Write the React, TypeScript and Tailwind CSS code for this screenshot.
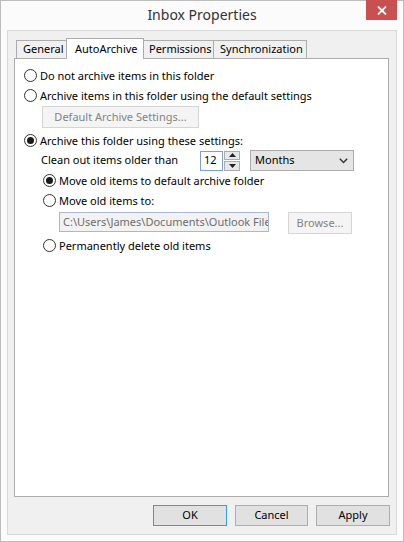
import React from "react";

const font = { fontFamily: '"Segoe UI", "Noto Sans", sans-serif' };

function Radio({ checked }: { checked?: boolean }) {
  return (
    <span className="flex h-[13px] w-[13px] shrink-0 items-center justify-center rounded-full border border-[#333333] bg-white">
      {checked && <span className="h-[7px] w-[7px] rounded-full bg-[#1a1a1a]" />}
    </span>
  );
}

function RadioRow({ label, checked, className = "" }: { label: string; checked?: boolean; className?: string }) {
  return (
    <div className={`flex h-[20px] items-center gap-[3px] ${className}`}>
      <Radio checked={checked} />
      <span className="text-[11px] leading-none text-black">{label}</span>
    </div>
  );
}

export default function App() {
  return (
    <div
      className="flex h-[542px] w-[404px] flex-col border border-[#bcbcbc] bg-[#fbfbfb]"
      style={font}
    >
      {/* Title bar */}
      <div className="grid h-[29px] grid-cols-[1fr_auto_1fr]">
        <div />
        <div className="flex items-center justify-center pb-[3px] text-[14px] text-[#333333]">
          Inbox Properties
        </div>
        <div className="flex items-start justify-end pr-[6px]">
          <div className="-mt-[1px] flex h-[20px] w-[31px] items-center justify-center bg-[#c75050]">
            <svg width="10" height="9" viewBox="0 0 10 9">
              <path d="M1 0.5 L9 8.5 M9 0.5 L1 8.5" stroke="white" strokeWidth="1.8" />
            </svg>
          </div>
        </div>
      </div>

      {/* Client area */}
      <div className="mx-[6px] flex h-[505px] flex-col border border-[#d9d9d9] bg-[#f0f0f0]">
        <div className="flex flex-col pl-[6px] pr-[7px] pt-[7px]">
          {/* Tabs */}
          <div className="flex items-end pl-[2px] text-[11px] text-black">
            <div className="flex h-[18px] w-[51px] items-center border border-b-0 border-[#acacac] bg-[#f0f0f0] pl-[6px]">
              General
            </div>
            <div className="relative z-10 -mb-[1px] -ml-[1px] flex h-[21px] w-[78px] items-start border border-b-0 border-[#acacac] bg-white pl-[8px] pt-[2px]">
              AutoArchive
            </div>
            <div className="-ml-[1px] flex h-[18px] w-[71px] items-center border border-b-0 border-[#acacac] bg-[#f0f0f0] pl-[5px]">
              Permissions
            </div>
            <div className="-ml-[1px] flex h-[18px] w-[94px] items-center border border-b-0 border-[#acacac] bg-[#f0f0f0] pl-[6px]">
              Synchronization
            </div>
          </div>

          {/* Panel */}
          <div className="flex h-[439px] flex-col border border-[#acacac] bg-white pl-[9px] pt-[6px]">
            <RadioRow label="Do not archive items in this folder" className="h-[19px]" />
            <RadioRow label="Archive items in this folder using the default settings" className="h-[19px]" />
            <div className="ml-[18px] mt-[1px] flex h-[22px] w-[157px] items-center justify-center border border-[#d5d5d5] bg-[#f4f4f4] text-[11px] text-[#838383]">
              Default Archive Settings...
            </div>
            <RadioRow label="Archive this folder using these settings:" checked className="mt-[2px] h-[19px]" />

            <div className="ml-[17px] flex h-[21px] items-center text-[11px] text-black">
              <span className="w-[159px]">Clean out items older than</span>
              <div className="flex h-[20px] w-[23px] items-center border border-[#7a9fd3] bg-white pl-[3px] text-[11px]">
                12
              </div>
              <div className="ml-[1px] flex h-[20px] w-[16px] flex-col gap-[1px]">
                <div className="flex h-[9px] items-center justify-center border border-[#acacac] bg-[#e8e8e8]">
                  <svg width="7" height="4" viewBox="0 0 7 4"><path d="M3.5 0 L7 4 L0 4 Z" fill="#222" /></svg>
                </div>
                <div className="flex h-[10px] items-center justify-center border border-[#acacac] bg-[#e8e8e8]">
                  <svg width="7" height="4" viewBox="0 0 7 4"><path d="M0 0 L7 0 L3.5 4 Z" fill="#222" /></svg>
                </div>
              </div>
              <div className="ml-[10px] flex h-[21px] w-[104px] items-center justify-between border border-[#acacac] bg-[#e5e5e5] pl-[4px] pr-[5px] text-[11px]">
                <span>Months</span>
                <svg width="9" height="6" viewBox="0 0 9 6">
                  <path d="M0.8 0.8 L4.5 4.6 L8.2 0.8" stroke="#333" strokeWidth="1.4" fill="none" />
                </svg>
              </div>
            </div>

            <div className="-mt-[1px] ml-[19px] flex flex-col">
              <RadioRow label="Move old items to default archive folder" checked />
              <RadioRow label="Move old items to:" />
              <div className="mt-[2px] flex h-[22px] items-start">
                <div className="ml-[16px] flex h-[20px] w-[210px] items-center overflow-hidden whitespace-nowrap border border-[#a9b8d0] bg-[#f2f2f2] pl-[3px] text-[11px] text-[#6d6d6d]">
                  C:\Users\James\Documents\Outlook Files
                </div>
                <div className="ml-[19px] flex h-[22px] w-[64px] items-center justify-center border border-[#d5d5d5] bg-[#f4f4f4] text-[11px] text-[#838383]">
                  Browse...
                </div>
              </div>
              <RadioRow label="Permanently delete old items" className="mt-[1px]" />
            </div>
          </div>
        </div>

        {/* Buttons */}
        <div className="flex justify-end gap-[8px] pr-[6px] pt-[8px] text-[11px] text-black">
          <div className="flex h-[21px] w-[74px] items-center justify-center border border-[#3399ff] bg-[#e1e1e1]">OK</div>
          <div className="flex h-[21px] w-[73px] items-center justify-center border border-[#adadad] bg-[#e1e1e1]">Cancel</div>
          <div className="flex h-[21px] w-[74px] items-center justify-center border border-[#adadad] bg-[#e1e1e1]">Apply</div>
        </div>
      </div>
    </div>
  );
}
